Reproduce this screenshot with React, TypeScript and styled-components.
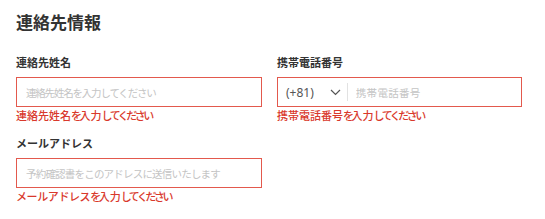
import React from "react";
import styled, { createGlobalStyle } from "styled-components";

const Global = createGlobalStyle`
  html, body { margin: 0; padding: 0; background: #fff; }
  body {
    font-family: "Noto Sans CJK JP", "Noto Sans", sans-serif;
    color: #333;
  }
`;

const Page = styled.div`
  padding: 10px 23px 0 16px;
`;

const Title = styled.h2`
  margin: 0 0 20px;
  font-size: 17px;
  line-height: 24px;
  font-weight: 700;
  color: #333;
`;

const Grid = styled.div`
  display: grid;
  grid-template-columns: 246px 245px;
  column-gap: 15px;
  row-gap: 13px;
`;

const Field = styled.div`
  display: flex;
  flex-direction: column;
`;

const Label = styled.label`
  font-size: 11px;
  line-height: 16px;
  font-weight: 700;
  color: #333;
  margin-bottom: 7px;
`;

const Box = styled.div`
  box-sizing: border-box;
  height: 30px;
  border: 1px solid #e3594d;
  background: #fff;
  display: flex;
  align-items: center;
`;

const Input = styled.input<{ $pad?: number; $ls?: number }>`
  flex: 1;
  min-width: 0;
  border: none;
  outline: none;
  background: transparent;
  font-family: "Noto Sans CJK JP", sans-serif;
  font-size: 10.5px;
  color: #333;
  padding: 0 ${(p) => p.$pad ?? 9}px;
  &::placeholder {
    color: #c4c4c4;
    letter-spacing: ${(p) => p.$ls ?? 0}px;
  }
`;

const Code = styled.div`
  display: flex;
  align-items: center;
  gap: 16px;
  padding: 0 6px 0 8px;
  font-size: 12px;
  color: #555;
  height: 18px;
  border-right: 1px solid #e2e2e2;
  font-family: "Noto Sans", sans-serif;
`;

const Error = styled.div`
  font-size: 11px;
  line-height: 14px;
  margin-top: 1px;
  color: #d9392c;
  font-weight: 500;
`;

const Kana = styled.span<{ $ls: number }>`
  letter-spacing: ${(p) => p.$ls}px;
`;

/* emulate proportional (palt) kana widths */
function Proportional({ text }: { text: string }) {
  const parts = text.match(/[\u3040-\u309f]+|[\u30a0-\u30ff]+|[^\u3040-\u30ff]+/g) || [];
  return (
    <>
      {parts.map((p, i) =>
        /[\u3040-\u309f]/.test(p) ? (
          <Kana key={i} $ls={-2.5}>{p}</Kana>
        ) : /[\u30a0-\u30ff]/.test(p) ? (
          <Kana key={i} $ls={-0.4}>{p}</Kana>
        ) : (
          <React.Fragment key={i}>{p}</React.Fragment>
        )
      )}
    </>
  );
}

const Chevron = () => (
  <svg width="11" height="7" viewBox="0 0 11 7" fill="none">
    <path d="M1 1l4.5 4.5L10 1" stroke="#555" strokeWidth="1.2" />
  </svg>
);

export default function App() {
  return (
    <Page>
      <Global />
      <Title>連絡先情報</Title>
      <Grid>
        <Field>
          <Label>連絡先姓名</Label>
          <Box>
            <Input $ls={-1.2} placeholder="連絡先姓名を入力してください" />
          </Box>
          <Error>
            <Proportional text="連絡先姓名を入力してください" />
          </Error>
        </Field>
        <Field>
          <Label>携帯電話番号</Label>
          <Box>
            <Code>
              <span>(+81)</span>
              <Chevron />
            </Code>
            <Input $pad={8} $ls={0.3} placeholder="携帯電話番号" />
          </Box>
          <Error>
            <Proportional text="携帯電話番号を入力してください" />
          </Error>
        </Field>
        <Field>
          <Label>メールアドレス</Label>
          <Box>
            <Input $ls={-0.8} placeholder="予約確認書をこのアドレスに送信いたします" />
          </Box>
          <Error>
            <Proportional text="メールアドレスを入力してください" />
          </Error>
        </Field>
      </Grid>
    </Page>
  );
}
